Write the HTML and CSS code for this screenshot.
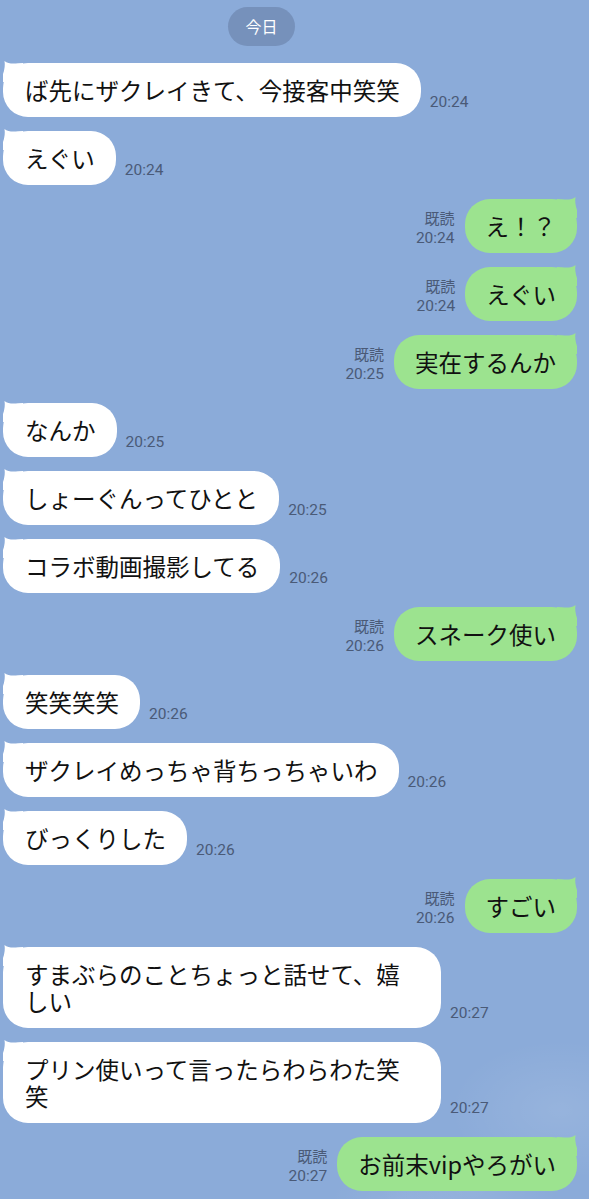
FILE: index.html
```html
<!DOCTYPE html>
<html lang="ja">
<head>
<meta charset="utf-8">
<title>LINE</title>
<link rel="stylesheet" href="styles.css">
</head>
<body>
<div class="chat">
  <div class="date">今日</div>

  <div class="row in"><div class="bubble">ば先にザクレイきて、今接客中笑笑</div><span class="time">20:24</span></div>
  <div class="row in"><div class="bubble">えぐい</div><span class="time">20:24</span></div>

  <div class="row out"><div class="meta"><span>既読</span><span class="time">20:24</span></div><div class="bubble">え！？</div></div>
  <div class="row out"><div class="meta"><span>既読</span><span class="time">20:24</span></div><div class="bubble">えぐい</div></div>
  <div class="row out"><div class="meta"><span>既読</span><span class="time">20:25</span></div><div class="bubble">実在するんか</div></div>

  <div class="row in"><div class="bubble">なんか</div><span class="time">20:25</span></div>
  <div class="row in"><div class="bubble">しょーぐんってひとと</div><span class="time">20:25</span></div>
  <div class="row in"><div class="bubble">コラボ動画撮影してる</div><span class="time">20:26</span></div>

  <div class="row out"><div class="meta"><span>既読</span><span class="time">20:26</span></div><div class="bubble">スネーク使い</div></div>

  <div class="row in"><div class="bubble">笑笑笑笑</div><span class="time">20:26</span></div>
  <div class="row in"><div class="bubble">ザクレイめっちゃ背ちっちゃいわ</div><span class="time">20:26</span></div>
  <div class="row in"><div class="bubble">びっくりした</div><span class="time">20:26</span></div>

  <div class="row out"><div class="meta"><span>既読</span><span class="time">20:26</span></div><div class="bubble">すごい</div></div>

  <div class="row in"><div class="bubble">すまぶらのことちょっと話せて、嬉しい</div><span class="time">20:27</span></div>
  <div class="row in"><div class="bubble">プリン使いって言ったらわらわた笑笑</div><span class="time">20:27</span></div>

  <div class="row out"><div class="meta"><span>既読</span><span class="time">20:27</span></div><div class="bubble">お前末vipやろがい</div></div>
</div>
</body>
</html>
```

FILE: styles.css
```css
html, body {
  margin: 0;
  padding: 0;
}

body {
  width: 589px;
  height: 1199px;
  overflow: hidden;
  background-color: #8babd9;
  background-image:
    radial-gradient(ellipse 110px 70px at 560px 1110px, rgba(255,255,255,0.10), rgba(255,255,255,0) 100%),
    radial-gradient(ellipse 90px 50px at 470px 1190px, rgba(255,255,255,0.08), rgba(255,255,255,0) 100%),
    radial-gradient(ellipse 70px 40px at 400px 1200px, rgba(255,255,255,0.06), rgba(255,255,255,0) 100%);
  font-family: "Noto Sans CJK JP", "Noto Sans", sans-serif;
}

.chat {
  display: flex;
  flex-direction: column;
  gap: 14px;
  padding-top: 7px;
}

.date {
  align-self: flex-start;
  margin-left: 228px;
  margin-bottom: 3px;
  width: 67px;
  height: 39px;
  border-radius: 20px;
  background: #7691bb;
  color: #ffffff;
  font-size: 16px;
  line-height: 39px;
  text-align: center;
}

.row {
  display: flex;
  align-items: flex-end;
}

.row.in {
  padding-left: 3px;
  gap: 9px;
}

.row.out {
  justify-content: flex-end;
  padding-right: 12px;
  gap: 10px;
}

.bubble {
  position: relative;
  max-width: 438px;
  box-sizing: border-box;
  padding: 13.5px 21px 13.5px 22px;
  border-radius: 25px;
  font-size: 23.5px;
  line-height: 27px;
  color: #111111;
}

.out .bubble {
  padding: 13.5px 21px;
  background: #9ce38f;
}

.in .bubble {
  background: #ffffff;
}

.bubble::before {
  content: "";
  position: absolute;
  top: -3px;
  width: 22px;
  height: 22px;
  background: inherit;
}

.in .bubble::before {
  left: -2px;
  clip-path: path("M3.5 1 Q8 4.5 17 3.3 L22 3 L22 22 L2 22 L2 14 Q4.5 7 3.5 1 Z");
}

.out .bubble::before {
  right: -2px;
  clip-path: path("M18.5 1 Q14 4.5 5 3.3 L0 3 L0 22 L20 22 L20 14 Q17.5 7 18.5 1 Z");
}

.time {
  font-family: Roboto, "Noto Sans", sans-serif;
  font-size: 15.5px;
  line-height: 20px;
  color: #4a5a77;
}

.in .time {
  padding-bottom: 5px;
}

.meta {
  display: flex;
  flex-direction: column;
  align-items: flex-end;
  padding-bottom: 5px;
  font-size: 15px;
  line-height: 20px;
  color: #4a5a77;
}
```
